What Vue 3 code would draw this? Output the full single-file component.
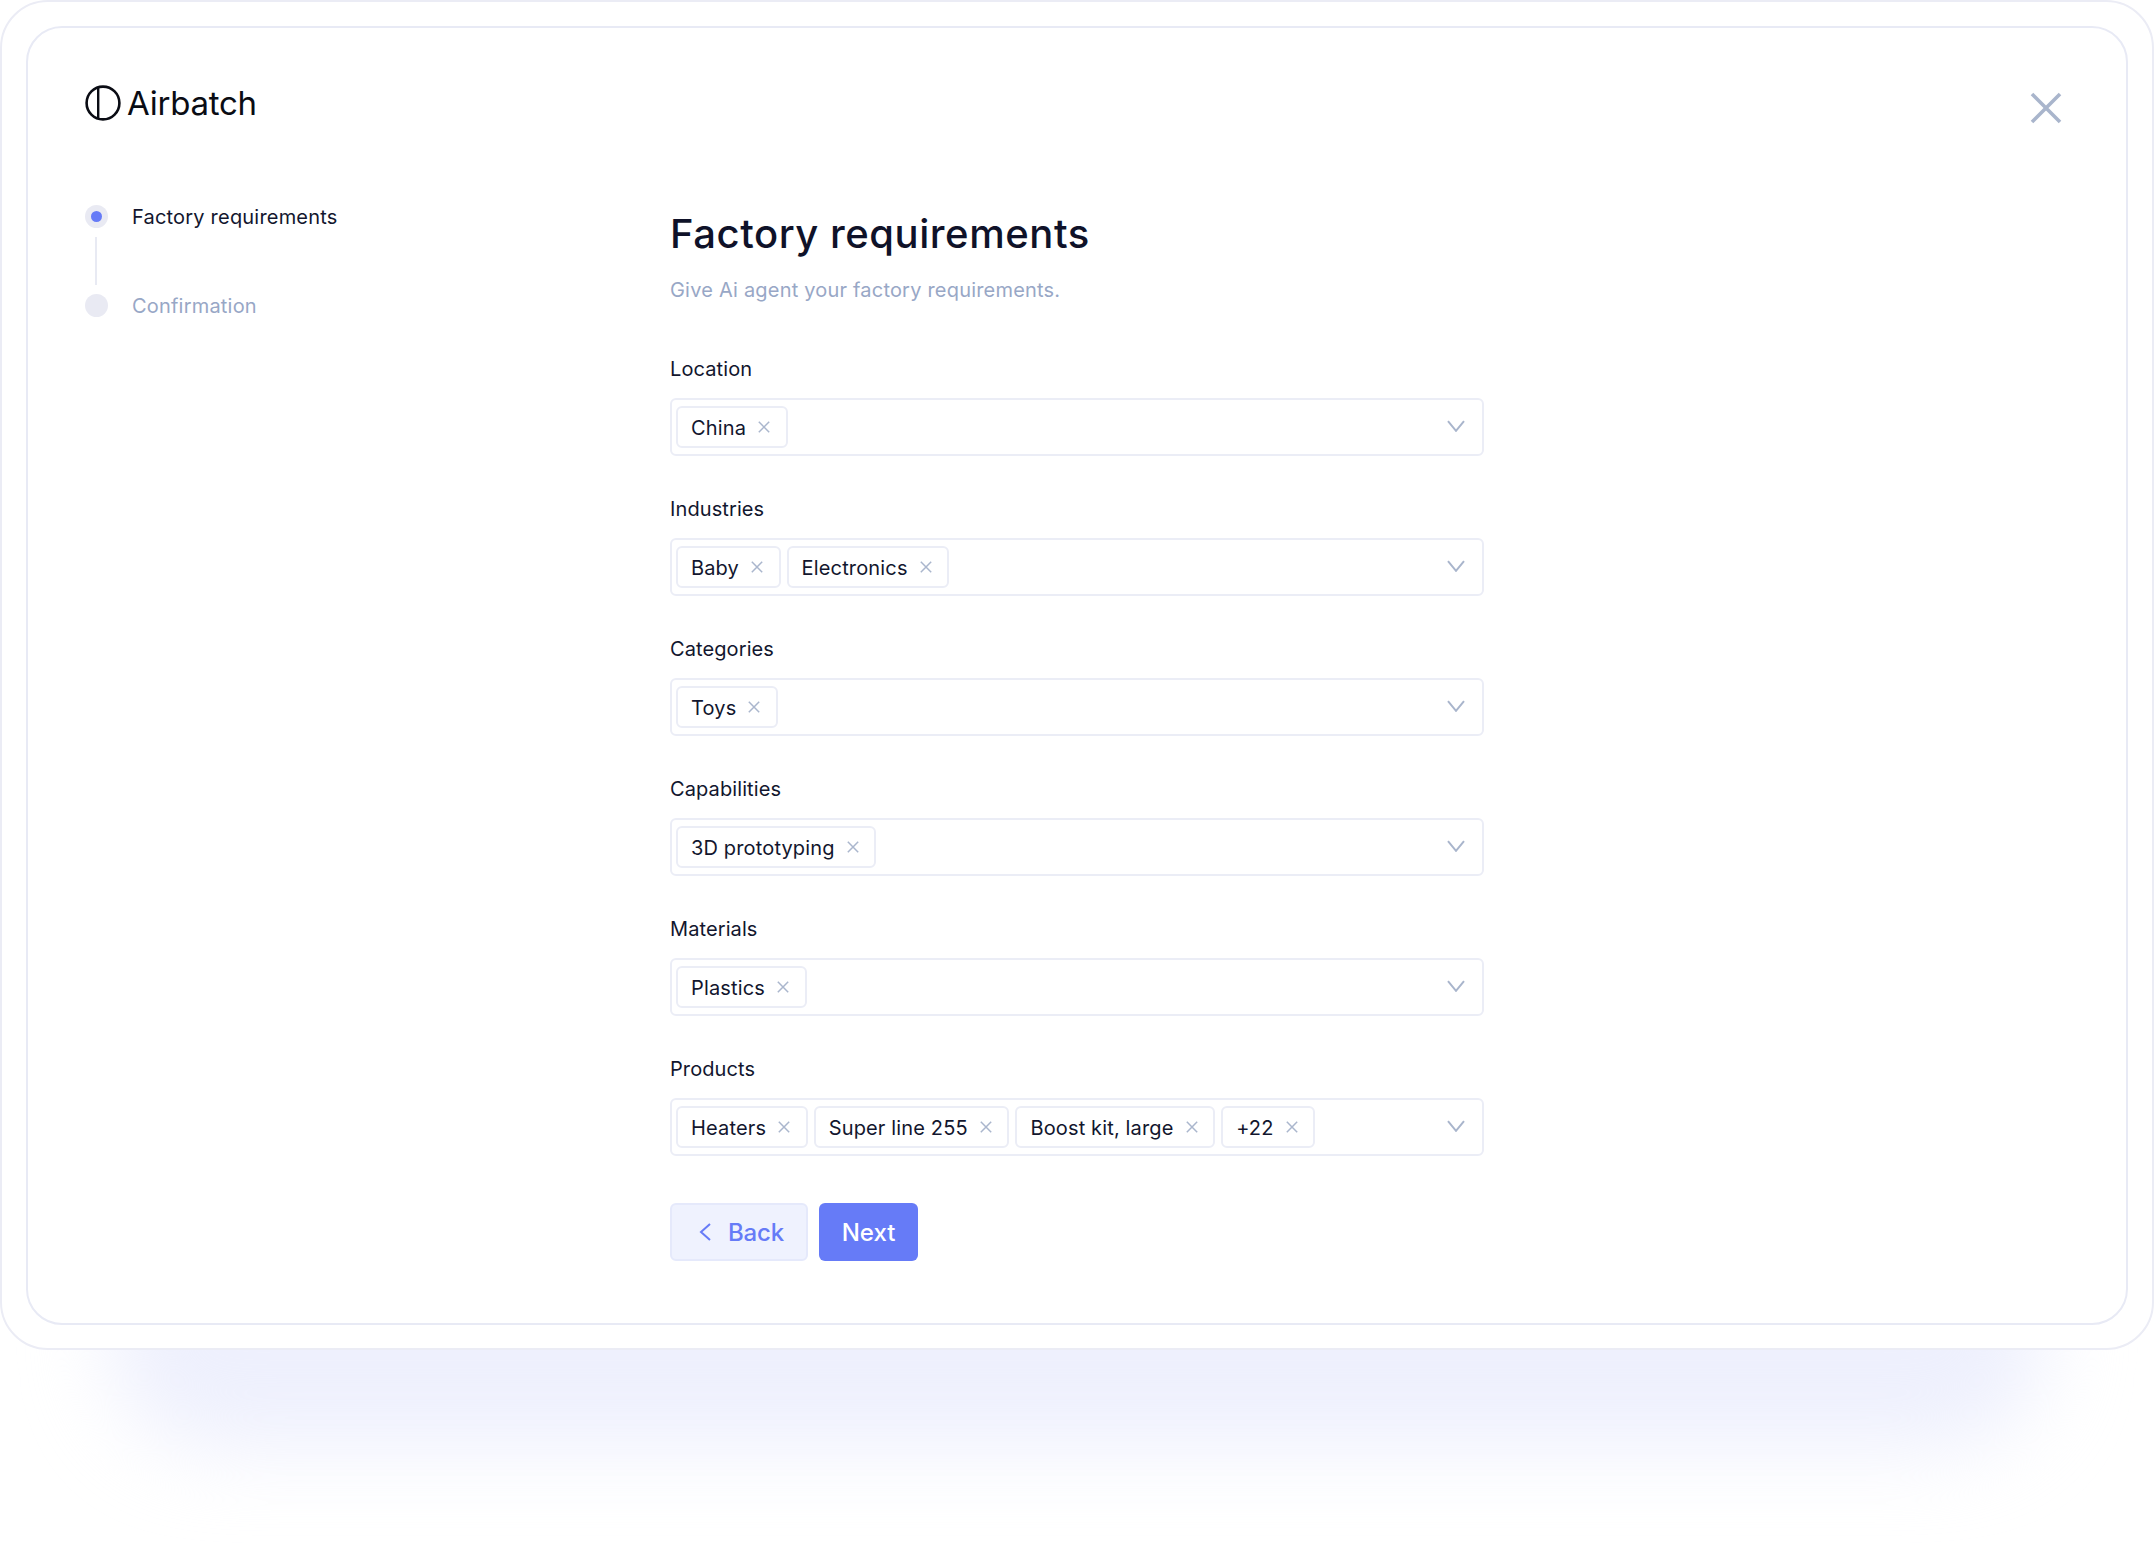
<script setup>
const fields = [
  { label: 'Location', tags: ['China'] },
  { label: 'Industries', tags: ['Baby', 'Electronics'] },
  { label: 'Categories', tags: ['Toys'] },
  { label: 'Capabilities', tags: ['3D prototyping'] },
  { label: 'Materials', tags: ['Plastics'] },
  { label: 'Products', tags: ['Heaters', 'Super line 255', 'Boost kit, large', '+22'] },
]
</script>

<template>
  <div class="page">
    <div class="glow"></div>
    <div class="frame">
      <div class="card">
        <aside class="side">
          <div class="logo">
            <svg class="logo-mark" width="36" height="36" viewBox="0 0 36 36" fill="none">
              <circle cx="18" cy="18" r="16.4" stroke="#0a0c14" stroke-width="2.6" />
              <path d="M13.2 2.4V33.6" stroke="#0a0c14" stroke-width="2.4" />
            </svg>
            <span class="logo-text">Airbatch</span>
          </div>
          <div class="steps">
            <div class="step">
              <span class="bullet"><span class="dot"></span></span>
              <span class="step-label">Factory requirements</span>
            </div>
            <div class="connector"></div>
            <div class="step">
              <span class="bullet"></span>
              <span class="step-label muted">Confirmation</span>
            </div>
          </div>
        </aside>

        <main class="main">
          <h1 class="title">Factory requirements</h1>
          <p class="sub">Give Ai agent your factory requirements.</p>

          <div v-for="f in fields" :key="f.label" class="field">
            <div class="label">{{ f.label }}</div>
            <div class="select">
              <span v-for="t in f.tags" :key="t" class="tag">
                <span class="tag-text">{{ t }}</span>
                <svg class="tag-x" width="12" height="12" viewBox="0 0 12 12" fill="none">
                  <path d="M.8.8l10.4 10.4M11.2.8L.8 11.2" stroke="#aab6cd" stroke-width="1.5" />
                </svg>
              </span>
              <svg class="chev" width="18" height="12" viewBox="0 0 18 12" fill="none">
                <path d="M1 1.2l8 9.6 8-9.6" stroke="#a9b5cc" stroke-width="2" />
              </svg>
            </div>
          </div>

          <div class="actions">
            <button class="btn back">
              <svg width="12" height="18" viewBox="0 0 12 18" fill="none">
                <path d="M11 1L2 9l9 8" stroke="#667bf7" stroke-width="2" />
              </svg>
              Back
            </button>
            <button class="btn next">Next</button>
          </div>
        </main>

        <svg class="close" width="32" height="32" viewBox="0 0 32 32" fill="none">
          <path d="M2 2l28 28M30 2L2 30" stroke="#a9b5cc" stroke-width="3.6" />
        </svg>
      </div>
    </div>
  </div>
</template>

<style scoped>
.page {
  position: relative;
  width: 2154px;
  height: 1559px;
  background: #fff;
  overflow: hidden;
  font-family: Inter, "Liberation Sans", sans-serif;
  color: #12162e;
}
.glow {
  position: absolute;
  left: 108px;
  top: 1230px;
  width: 1938px;
  height: 218px;
  border-radius: 120px;
  background: #eef0fd;
  filter: blur(40px);
}
.frame {
  position: relative;
  box-sizing: border-box;
  width: 2154px;
  height: 1350px;
  padding: 24px;
  background: #fff;
  border: 2px solid #ebecf5;
  border-radius: 48px;
}
.card {
  position: relative;
  box-sizing: border-box;
  height: 1299px;
  display: flex;
  background: #fff;
  border: 2px solid #e8eaf5;
  border-radius: 36px;
  padding-left: 57px;
}
.side {
  width: 585px;
  flex: none;
}
.logo {
  display: flex;
  align-items: center;
  gap: 6px;
  margin-top: 57px;
  height: 36px;
}
.logo-text {
  font-size: 33px;
  letter-spacing: -0.25px;
  color: #0a0c14;
  line-height: 36px;
}
.steps {
  margin-top: 84px;
}
.step {
  display: flex;
  align-items: center;
  gap: 24px;
  height: 23px;
  font-size: 20px;
  letter-spacing: 0.2px;
}
.bullet {
  width: 23px;
  height: 23px;
  border-radius: 50%;
  background: #e9eaf3;
  display: flex;
  align-items: center;
  justify-content: center;
  flex: none;
}
.dot {
  width: 11px;
  height: 11px;
  border-radius: 50%;
  background: #667bf7;
}
.connector {
  width: 2px;
  height: 48px;
  margin: 9px 0 9px 10px;
  background: #e8eaf3;
}
.muted {
  color: #98a7c6;
}
.main {
  width: 814px;
  padding-top: 182px;
}
.title {
  margin: 0;
  font-size: 40px;
  line-height: 48px;
  font-weight: 500;
  letter-spacing: 0.55px;
  color: #0f1229;
}
.sub {
  margin: 18px 0 0;
  font-size: 20px;
  line-height: 28px;
  letter-spacing: 0.2px;
  color: #98a7c6;
}
.field {
  margin-top: 39px;
}
.sub + .field {
  margin-top: 51px;
}
.label {
  font-size: 20px;
  line-height: 29px;
  letter-spacing: 0.1px;
  margin-bottom: 14px;
}
.select {
  position: relative;
  box-sizing: border-box;
  height: 58px;
  display: flex;
  align-items: center;
  gap: 6px;
  padding: 0 4px;
  border: 2px solid #ebedf6;
  border-radius: 6px;
}
.tag {
  box-sizing: border-box;
  height: 42px;
  display: flex;
  align-items: center;
  gap: 12px;
  padding: 0 15.6px 0 13px;
  border: 2px solid #ebedf6;
  border-radius: 6px;
  font-size: 20px;
  letter-spacing: 0.15px;
}
.tag-text {
  line-height: 30px;
  padding-top: 2px;
}
.chev {
  position: absolute;
  right: 17px;
  top: 20px;
}
.actions {
  display: flex;
  gap: 11px;
  margin-top: 47px;
}
.btn {
  box-sizing: border-box;
  height: 58px;
  border-radius: 6px;
  font-family: inherit;
  font-size: 24px;
  font-weight: 500;
  display: flex;
  align-items: center;
}
.back {
  width: 138px;
  padding: 0 0 0 27px;
  gap: 17px;
  background: #eff2fe;
  border: 2px solid #e5e9fb;
  color: #667bf7;
  letter-spacing: -0.2px;
}
.next {
  width: 99px;
  justify-content: center;
  padding: 0;
  background: #667bf7;
  border: none;
  color: #fff;
}
.close {
  position: absolute;
  top: 64px;
  right: 64px;
}
</style>

<style>
html, body {
  margin: 0;
  background: #fff;
}
</style>
